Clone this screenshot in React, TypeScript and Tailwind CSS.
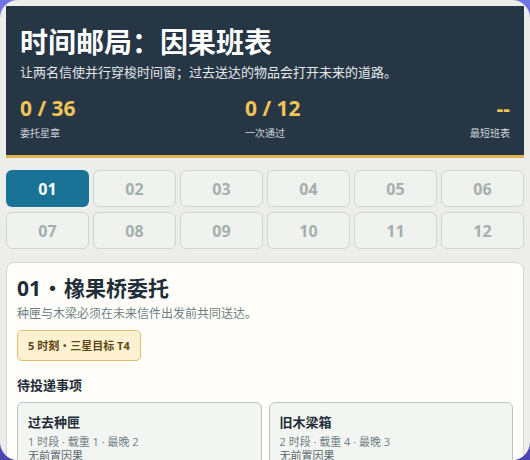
import React from "react";

const levels = ["01", "02", "03", "04", "05", "06", "07", "08", "09", "10", "11", "12"];

const stats = [
  { value: "0 / 36", label: "委托星章", align: "text-left" },
  { value: "0 / 12", label: "一次通过", align: "text-left" },
  { value: "--", label: "最短班表", align: "text-right" },
];

const items = [
  { title: "过去种匣", meta: "1 时段 · 载重 1 · 最晚 2", dep: "无前置因果" },
  { title: "旧木梁箱", meta: "2 时段 · 载重 4 · 最晚 3", dep: "无前置因果" },
];

const cjkDot = { fontFamily: '"Noto Sans CJK SC", sans-serif' };

export default function App() {
  return (
    <div
      className="w-[530px] h-[460px] overflow-hidden bg-gradient-to-b from-[#7074e4] to-[#4c46b4]"
      style={{ fontFamily: '"Open Sans", "Noto Sans CJK SC", sans-serif' }}
    >
      <div className="h-[460px] rounded-[18px] bg-[#edeeeb] p-[6px] overflow-hidden">
        <header className="bg-[#273645] border-b-[3px] border-[#e2b54a] px-[14px] pt-[18px] pb-[15px]">
          <h1 className="text-[28px] leading-[36px] font-bold text-white">时间邮局：因果班表</h1>
          <p className="mt-[3px] text-[13px] leading-[18px] text-[#e3e8ec]">
            让两名信使并行穿梭时间窗；过去送达的物品会打开未来的道路。
          </p>
          <div className="mt-[14px] flex justify-between">
            {stats.map((s) => (
              <div key={s.label} className={s.align}>
                <div className="text-[21px] leading-[26px] font-bold text-[#f2c457]">{s.value}</div>
                <div className="mt-[5px] text-[10px] leading-[14px] text-[#cdd6dc]">{s.label}</div>
              </div>
            ))}
          </div>
        </header>

        <div className="mt-[12px] grid grid-cols-6 gap-x-[4px] gap-y-[5px]">
          {levels.map((l, i) =>
            i === 0 ? (
              <div
                key={l}
                className="h-[37px] rounded-[6px] bg-[#1a7397] flex items-center justify-center text-[16px] font-bold text-white"
              >
                {l}
              </div>
            ) : (
              <div
                key={l}
                className="h-[37px] rounded-[6px] border border-[#cfd6d2] bg-[#f0f2ef] flex items-center justify-center text-[16px] font-bold text-[#a5afad]"
              >
                {l}
              </div>
            )
          )}
        </div>

        <section className="mt-[13px] rounded-[8px] border border-[#d0d6d3] bg-[#fffefa] px-[10px] pt-[9px] pb-4">
          <h2 className="text-[21px] leading-[30px] font-bold text-[#1f2d38]">
            01<span style={cjkDot} className="px-[1px]">·</span>橡果桥委托
          </h2>
          <p className="mt-[3px] text-[12px] leading-[16px] text-[#6f7e84]">
            种匣与木梁必须在未来信件出发前共同送达。
          </p>
          <div className="mt-[8px] inline-block rounded-[5px] border border-[#e5c06a] bg-[#fdf1d2] px-[10px] py-[6px] text-[11px] leading-[16px] font-bold text-[#5e4512]">
            5 时刻<span style={cjkDot}>·</span>三星目标 T4
          </div>
          <h3 className="mt-[15px] text-[13px] leading-[18px] font-bold text-[#1f2d38]">待投递事项</h3>
          <div className="mt-[8px] grid grid-cols-2 gap-[7px]">
            {items.map((it) => (
              <div key={it.title} className="rounded-[6px] border border-[#b9c3bf] bg-[#f3f5f2] px-[10px] pt-[10px] pb-[8px]">
                <div className="text-[13px] leading-[18px] font-bold text-[#1f2d38]">{it.title}</div>
                <div className="mt-[4px] text-[11px] leading-[14px] text-[#6f7e84]">{it.meta}</div>
                <div className="text-[11px] leading-[14px] text-[#5a686e]">{it.dep}</div>
              </div>
            ))}
          </div>
        </section>
      </div>
    </div>
  );
}
